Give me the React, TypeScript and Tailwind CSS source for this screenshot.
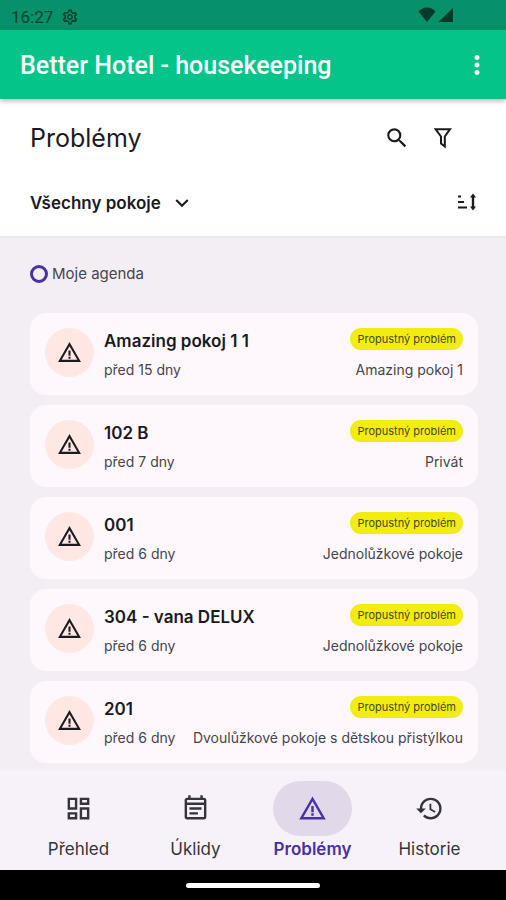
import {
  MdHistory,
  MdKeyboardArrowDown,
  MdMoreVert,
  MdOutlineDashboard,
  MdOutlineEventNote,
  MdOutlineSettings,
  MdSearch,
  MdWarningAmber,
} from "react-icons/md";

const problems = [
  { id: 1, room: "Amazing pokoj 1 1", age: "před 15 dny", category: "Amazing pokoj 1" },
  { id: 2, room: "102 B", age: "před 7 dny", category: "Privát" },
  { id: 3, room: "001", age: "před 6 dny", category: "Jednolůžkové pokoje" },
  { id: 4, room: "304 - vana DELUX", age: "před 6 dny", category: "Jednolůžkové pokoje" },
  { id: 5, room: "201", age: "před 6 dny", category: "Dvoulůžkové pokoje s dětskou přistýlkou" },
];

const tabs = [
  { label: "Přehled", icon: MdOutlineDashboard, active: false },
  { label: "Úklidy", icon: MdOutlineEventNote, active: false },
  { label: "Problémy", icon: MdWarningAmber, active: true },
  { label: "Historie", icon: MdHistory, active: false },
];

function StatusBar() {
  return (
    <div className="flex h-[30px] items-center justify-between bg-[#06916a] pr-[52px] pl-[11px] text-[#04402e]">
      <div className="flex items-center gap-2 pt-1 font-[Roboto,sans-serif] text-[17px] leading-6">
        <span>16:27</span>
        <MdOutlineSettings size={18} aria-hidden="true" />
      </div>
      <svg width="36" height="16" viewBox="0 0 36 16" fill="#043a2a" aria-hidden="true">
        <path d="M0.5 4.5Q4 0.500 9 0.500T17.500 4.500L9 15Z" />
        <path d="M35 1V15H20.500Z" />
      </svg>
    </div>
  );
}

function AppBar() {
  return (
    <header className="relative flex h-[69px] items-center justify-between bg-[#05c489] pr-[14px] pl-5 text-white shadow-[0_2px_5px_rgba(60,30,50,0.35)]">
      <h1 className="pt-0.5 font-[Roboto,sans-serif] text-[25px] font-medium">Better Hotel - housekeeping</h1>
      <button type="button" aria-label="Více možností">
        <MdMoreVert size={30} />
      </button>
    </header>
  );
}

function Toolbar() {
  return (
    <section className="border-b-2 border-[#ebe9ec] bg-white pr-7 pl-[30px] text-[#1b1b1f]">
      <div className="flex h-20 items-center justify-between">
        <h2 className="text-[25px]">Problémy</h2>
        <div className="flex items-center gap-5 pr-[22px] pb-0.5">
          <button type="button" aria-label="Hledat">
            <MdSearch size={26} />
          </button>
          <button type="button" aria-label="Filtr" className="flex w-[26px] justify-center">
            <svg width="18" height="22" viewBox="0 0 18 22" fill="none" stroke="currentColor" strokeWidth="2" aria-hidden="true">
              <path d="M1.500 2.200H16L10.800 9.500V19.500L7 16.500V9.500Z" />
            </svg>
          </button>
        </div>
      </div>
      <div className="flex h-[57px] items-start justify-between pt-[11px]">
        <button type="button" className="flex items-center gap-2 text-[17px] leading-6 font-semibold">
          Všechny pokoje
          <MdKeyboardArrowDown size={26} aria-hidden="true" />
        </button>
        <button type="button" aria-label="Seřadit" className="flex h-6 items-center">
          <svg width="22" height="18" viewBox="0 0 22 18" fill="none" stroke="currentColor" strokeWidth="2" aria-hidden="true">
            <path d="M2 3.500H5M2 9H8M2 14.500H11" />
            <path d="M17 3V15" strokeWidth="2.400" />
            <path d="M17 0.500L20 4.500H14ZM17 17.500L20 13.500H14Z" fill="currentColor" stroke="none" />
          </svg>
        </button>
      </div>
    </section>
  );
}

function ProblemCard({ room, age, category }: { room: string; age: string; category: string }) {
  return (
    <li className="flex gap-[10px] rounded-2xl bg-[#fef8fd] p-[15px]">
      <div className="flex size-[49px] shrink-0 items-center justify-center rounded-full bg-[#ffe8e4] text-[#1b1b1f]">
        <MdWarningAmber size={25} aria-hidden="true" />
      </div>
      <div className="flex min-w-0 flex-1 flex-col gap-2">
        <div className="flex h-[22px] items-center justify-between">
          <h3 className="pt-1 text-[17px] leading-6 font-semibold text-[#1b1b1f]">{room}</h3>
          <span className="flex h-[22px] items-center rounded-full bg-[#f2ec10] px-[7px] text-[11px] text-[#4c4a18]">
            Propustný problém
          </span>
        </div>
        <div className="flex h-[22px] items-center justify-between text-[14px] text-[#46454c]">
          <p>{age}</p>
          <p>{category}</p>
        </div>
      </div>
    </li>
  );
}

function BottomNav() {
  return (
    <nav className="flex h-[99px] items-start bg-[#f7f2f9] pt-[10px] pr-[18px] pl-5">
      {tabs.map(({ label, icon: Icon, active }) => (
        <a
          key={label}
          href="#"
          aria-current={active ? "page" : undefined}
          className={`flex flex-1 flex-col items-center text-[17px] leading-[26px] ${
            active ? "font-semibold text-[#4a2fa5]" : "text-[#35343a]"
          }`}
        >
          <span className={`flex h-[55px] w-[79px] items-center justify-center rounded-full ${active ? "bg-[#e1d9ea]" : ""}`}>
            <Icon size={29} aria-hidden="true" />
          </span>
          {label}
        </a>
      ))}
    </nav>
  );
}

export default function App() {
  return (
    <div className="flex min-h-screen flex-col bg-[#f3eef3] font-[Inter,sans-serif]">
      <StatusBar />
      <AppBar />
      <Toolbar />
      <main className="flex-1 px-7 pt-6 pl-[30px]">
        <label className="flex h-6 items-center gap-1 text-[15px] text-[#46454c]">
          <input
            type="checkbox"
            className="size-[18px] appearance-none rounded-full border-3 border-[#4a2fa5] checked:bg-[#4a2fa5]"
          />
          Moje agenda
        </label>
        <ul className="mt-[27px] flex flex-col gap-[10px]">
          {problems.map((p) => (
            <ProblemCard key={p.id} room={p.room} age={p.age} category={p.category} />
          ))}
        </ul>
      </main>
      <BottomNav />
      <div className="flex h-[30px] items-center justify-center bg-black">
        <div className="h-[5px] w-[134px] rounded-full bg-white" />
      </div>
    </div>
  );
}
